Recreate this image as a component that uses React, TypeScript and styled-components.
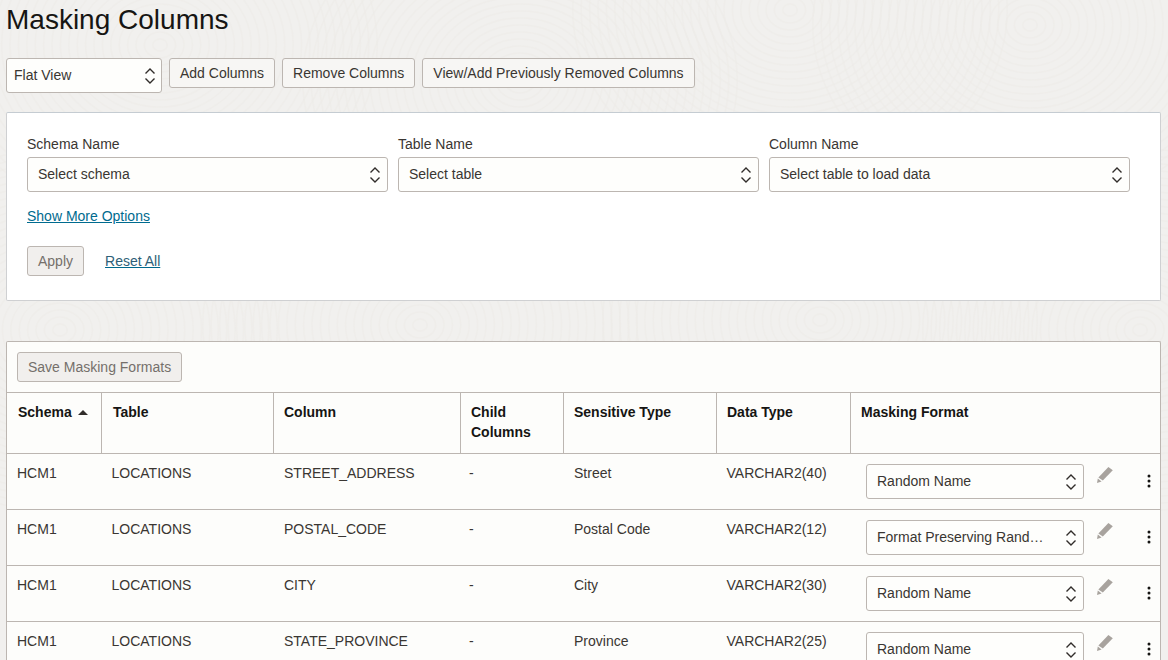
import React from "react";
import styled, { createGlobalStyle } from "styled-components";

const Global = createGlobalStyle`
  html, body { margin: 0; padding: 0; height: 660px; overflow: hidden; background: #f1f0ee; }
  body { font-family: "Liberation Sans", Arial, sans-serif; color: #161513; }
  * { box-sizing: border-box; }
`;

const Page = styled.div`
  position: relative;
  width: 1168px;
  height: 660px;
  overflow: hidden;
  padding: 0 7px 0 6px;
`;
const Texture = styled.svg`
  position: absolute;
  inset: 0;
  pointer-events: none;
`;
const Content = styled.div`
  position: relative;
`;
const Title = styled.h1`
  margin: 0;
  height: 58px;
  padding-top: 3px;
  font-size: 28px;
  line-height: 34px;
  font-weight: 400;
`;
const Toolbar = styled.div`
  display: flex;
  align-items: flex-start;
  gap: 7px;
  height: 54px;
`;
const SelectBox = styled.div<{ $w?: number; $pad?: number; $right?: number }>`
  display: flex;
  align-items: center;
  justify-content: space-between;
  width: ${(p) => (p.$w ? `${p.$w}px` : "auto")};
  height: 35px;
  padding: 0 ${(p) => p.$right ?? 5}px 0 ${(p) => p.$pad ?? 10}px;
  background: #fefefc;
  border: 1px solid #bcb6b1;
  border-radius: 3px;
  font-size: 14px;
  color: #3a3632;
  white-space: nowrap;
`;
const SelectText = styled.span`
  display: block;
  margin-top: -2px;
`;
const Button = styled.div<{ $off?: boolean }>`
  display: inline-flex;
  align-items: center;
  height: 30px;
  padding: 0 10px;
  background: ${(p) => (p.$off ? "#f1efed" : "#f7f6f4")};
  border: 1px solid #bcb6b1;
  border-radius: 3px;
  font-size: 14px;
  color: ${(p) => (p.$off ? "#75706b" : "#3a3632")};
  white-space: nowrap;
`;
const FilterCard = styled.section`
  height: 189px;
  background: #fff;
  border: 1px solid #cfd0d2;
  border-top-color: #c5ccd2;
  border-radius: 2px;
  padding: 22px 20px 0;
`;
const FilterRow = styled.div`
  display: grid;
  grid-template-columns: 361px 361px 361px;
  column-gap: 10px;
`;
const Field = styled.div`
  display: flex;
  flex-direction: column;
`;
const Label = styled.label`
  height: 22px;
  font-size: 14px;
  line-height: 18px;
  color: #3a3632;
`;
const MoreLink = styled.a`
  display: block;
  margin-top: 15px;
  font-size: 14px;
  line-height: 18px;
  color: #006b8f;
  text-decoration: underline;
`;
const ActionRow = styled.div`
  display: flex;
  align-items: center;
  gap: 21px;
  margin-top: 21px;
`;
const ResetLink = styled.a`
  font-size: 14px;
  color: #2f5f78;
  text-decoration: underline;
  text-decoration-color: #00688c;
`;
const TableCard = styled.section`
  margin-top: 40px;
  background: #fdfdfb;
  border: 1px solid #bcb6b1;
  border-bottom: none;
  border-radius: 2px 2px 0 0;
`;
const TableBar = styled.div`
  display: flex;
  align-items: flex-start;
  height: 51px;
  padding: 10px;
  border-bottom: 1px solid #bcb6b1;
`;
const columns = "95px 172px 187px 103px 153px 134px 1fr";
const HeadRow = styled.div`
  display: grid;
  grid-template-columns: ${columns};
  height: 61px;
  border-bottom: 1px solid #bcb6b1;
`;
const HeadCell = styled.div<{ $last?: boolean; $pad?: number }>`
  display: block;
  padding: 9px 10px 0 ${(p) => p.$pad ?? 10}px;
  font-size: 14px;
  line-height: 20px;
  font-weight: 700;
  color: #161513;
  border-right: ${(p) => (p.$last ? "none" : "1px solid #bcb6b1")};
`;
const SortMark = styled.span`
  display: inline-block;
  margin-left: 6px;
  vertical-align: 2px;
  border-left: 5px solid transparent;
  border-right: 5px solid transparent;
  border-bottom: 5px solid #312d2a;
`;
const Row = styled.div`
  display: grid;
  grid-template-columns: ${columns};
  height: 56px;
  border-bottom: 1px solid #bcb6b1;
`;
const Cell = styled.div<{ $pad: number }>`
  padding-top: 10px;
  padding-left: ${(p) => p.$pad}px;
  font-size: 14px;
  line-height: 18px;
  color: #3a3632;
  white-space: nowrap;
`;
const FormatCell = styled.div`
  display: flex;
  align-items: flex-start;
  padding: 10px 0 0 15px;
`;
const PencilBtn = styled.span`
  display: block;
  margin: 2px 0 0 12px;
  height: 18px;
`;
const DotsBtn = styled.span`
  display: block;
  margin: 9px 0 0 33px;
  height: 16px;
`;

const Chevrons = () => (
  <svg width="14" height="18" viewBox="0 0 14 18" fill="none" stroke="#312d2a" strokeWidth="1.4">
    <path d="M2.5 6.5 7 2l4.5 4.5M2.5 11.5 7 16l4.5-4.5" />
  </svg>
);
const Pencil = () => (
  <svg width="18" height="18" viewBox="0 0 18 18" fill="#a8a39e">
    <path d="M12.4 1 16.8 4.2 6.8 14.6 2.4 11.4Z" />
    <path d="M1.8 12.6 5.6 15.4 1 17Z" />
  </svg>
);
const Dots = () => (
  <svg width="4" height="16" viewBox="0 0 4 16" fill="#161513">
    <circle cx="2" cy="3" r="1.5" />
    <circle cx="2" cy="8" r="1.5" />
    <circle cx="2" cy="13" r="1.5" />
  </svg>
);

const rings = Array.from({ length: 26 }, (_, i) => 6 + i * 7);
const centers: [number, number][] = [
  [160, 45], [520, 80], [790, 10], [1030, 25], [60, 330], [420, 325], [820, 320], [1140, 330],
];
const cellPads = [10, 9.5, 10, 8, 10, 9.5];

const rows = [
  ["HCM1", "LOCATIONS", "STREET_ADDRESS", "-", "Street", "VARCHAR2(40)", "Random Name"],
  ["HCM1", "LOCATIONS", "POSTAL_CODE", "-", "Postal Code", "VARCHAR2(12)", "Format Preserving Rand…"],
  ["HCM1", "LOCATIONS", "CITY", "-", "City", "VARCHAR2(30)", "Random Name"],
  ["HCM1", "LOCATIONS", "STATE_PROVINCE", "-", "Province", "VARCHAR2(25)", "Random Name"],
];

export default function App() {
  return (
    <Page>
      <Global />
      <Texture width="1168" height="660" fill="none" stroke="#ecebe8" strokeWidth="1.5" strokeOpacity="0.55">
        {centers.map(([cx, cy]) =>
          rings.map((r) => <ellipse key={`${cx}-${r}`} cx={cx} cy={cy} rx={r * 1.2} ry={r} />)
        )}
      </Texture>
      <Content>
        <Title>Masking Columns</Title>
        <Toolbar>
          <SelectBox $w={156} $pad={7} $right={4}><SelectText>Flat View</SelectText><Chevrons /></SelectBox>
          <Button>Add Columns</Button>
          <Button>Remove Columns</Button>
          <Button>View/Add Previously Removed Columns</Button>
        </Toolbar>
        <FilterCard>
          <FilterRow>
            <Field><Label>Schema Name</Label><SelectBox><SelectText>Select schema</SelectText><Chevrons /></SelectBox></Field>
            <Field><Label>Table Name</Label><SelectBox><SelectText>Select table</SelectText><Chevrons /></SelectBox></Field>
            <Field><Label>Column Name</Label><SelectBox><SelectText>Select table to load data</SelectText><Chevrons /></SelectBox></Field>
          </FilterRow>
          <MoreLink>Show More Options</MoreLink>
          <ActionRow>
            <Button $off>Apply</Button>
            <ResetLink>Reset All</ResetLink>
          </ActionRow>
        </FilterCard>
        <TableCard>
          <TableBar><Button $off>Save Masking Formats</Button></TableBar>
          <HeadRow>
            <HeadCell $pad={11}>Schema<SortMark /></HeadCell>
            <HeadCell $pad={11}>Table</HeadCell>
            <HeadCell>Column</HeadCell>
            <HeadCell>Child<br />Columns</HeadCell>
            <HeadCell>Sensitive Type</HeadCell>
            <HeadCell>Data Type</HeadCell>
            <HeadCell $last>Masking Format</HeadCell>
          </HeadRow>
          {rows.map((r) => (
            <Row key={r[2]}>
              {r.slice(0, 6).map((c, i) => <Cell key={i} $pad={cellPads[i]}>{c}</Cell>)}
              <FormatCell>
                <SelectBox $w={218}><SelectText>{r[6]}</SelectText><Chevrons /></SelectBox>
                <PencilBtn><Pencil /></PencilBtn>
                <DotsBtn><Dots /></DotsBtn>
              </FormatCell>
            </Row>
          ))}
        </TableCard>
      </Content>
    </Page>
  );
}
